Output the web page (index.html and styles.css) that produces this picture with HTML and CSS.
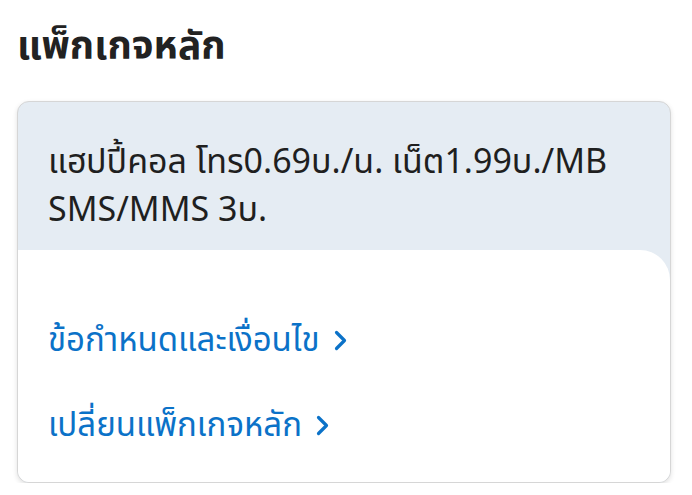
FILE: index.html
```html
<!DOCTYPE html>
<html lang="th">
<head>
  <meta charset="UTF-8" />
  <meta name="viewport" content="width=device-width, initial-scale=1.0"/>
  <title>แพ็กเกจหลัก</title>
  <link rel="stylesheet" href="styles.css">
</head>
<body>
  <div class="page">
    <h2 class="title">แพ็กเกจหลัก</h2>

    <div class="card">
      <div class="card-head">
        <p class="desc">แฮปปี้คอล โทร0.69บ./น. เน็ต1.99บ./MB SMS/MMS 3บ.</p>
      </div>
      <div class="card-body">
        <a class="link" href="#">ข้อกำหนดและเงื่อนไข
          <svg class="chev" width="13" height="21" viewBox="0 0 13 21"><path d="M2.5 2.5 L10.5 10.5 L2.5 18.5" fill="none" stroke="currentColor" stroke-width="3.2" stroke-linecap="round" stroke-linejoin="round"/></svg>
        </a>
        <a class="link" href="#">เปลี่ยนแพ็กเกจหลัก
          <svg class="chev" width="13" height="21" viewBox="0 0 13 21"><path d="M2.5 2.5 L10.5 10.5 L2.5 18.5" fill="none" stroke="currentColor" stroke-width="3.2" stroke-linecap="round" stroke-linejoin="round"/></svg>
        </a>
      </div>
    </div>
  </div>
</body>
</html>
```

FILE: styles.css
```css
* {
  box-sizing: border-box;
}

body {
  margin: 0;
  background: #ffffff;
  font-family: "Noto Sans", "Noto Sans Thai", "Liberation Sans", sans-serif;
  color: #1f1f1f;
}

.page {
  padding: 16px 21px 0 17px;
}

.title {
  margin: 0 0 29px;
  font-size: 39px;
  font-weight: 700;
  line-height: 56px;
  color: #222222;
}

.card {
  background: #e5ecf3;
  border: 1px solid #d6d6d6;
  border-radius: 12px;
  box-shadow: 0 2px 5px rgba(0, 0, 0, 0.12);
  overflow: hidden;
}

.card-head {
  padding: 34px 30px 18px;
}

.desc {
  margin: 0;
  font-size: 34px;
  line-height: 48px;
  color: #1f1f1f;
}

.card-body {
  background: #ffffff;
  border-top-right-radius: 30px;
  padding: 64px 30px 33px;
  display: flex;
  flex-direction: column;
  align-items: flex-start;
  gap: 35px;
}

.link {
  display: flex;
  align-items: center;
  gap: 14px;
  color: #0b72c8;
  text-decoration: none;
  font-size: 33px;
  line-height: 50px;
}

.chev {
  flex: none;
  margin-top: 2px;
}
```
